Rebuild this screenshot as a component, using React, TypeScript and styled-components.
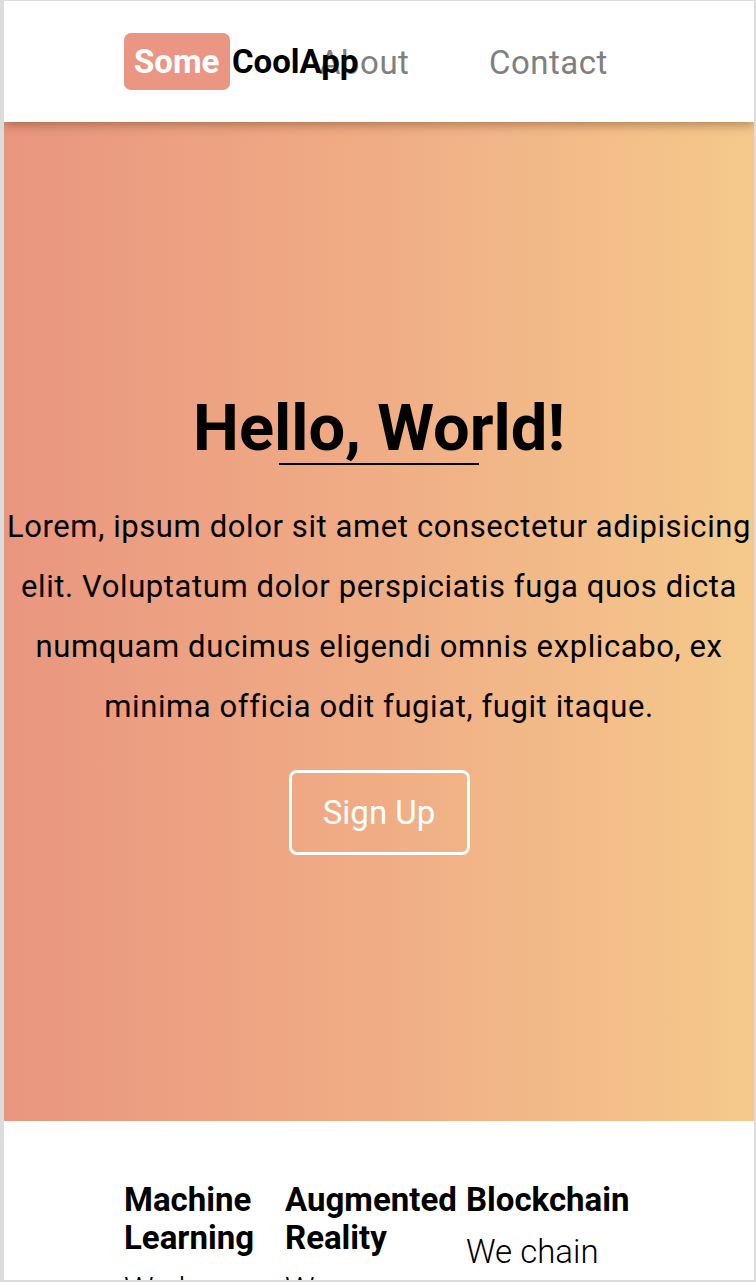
import React from "react";
import styled, { createGlobalStyle } from "styled-components";

const Global = createGlobalStyle`
  html, body { margin: 0; padding: 0; background: #fff; }
  body { font-family: Roboto, "Noto Sans", "Liberation Sans", sans-serif; }
  * { box-sizing: border-box; }
`;

const Frame = styled.div`
  width: 756px;
  height: 1282px;
  overflow: hidden;
  border-style: solid;
  border-color: #dcdcdc;
  border-width: 1px 2px 2px 4px;
  display: flex;
  flex-direction: column;
`;

const Header = styled.header`
  height: 121px;
  flex: none;
  background: #fff;
  display: flex;
  align-items: center;
  padding-left: 120px;
  position: relative;
  z-index: 2;
  box-shadow: 0 3px 10px rgba(90, 50, 20, 0.45);
`;

const Logo = styled.div`
  width: 106px;
  flex: none;
  display: flex;
  align-items: center;
  white-space: nowrap;
  font-size: 33px;
  font-weight: 700;
  position: relative;
  z-index: 1;
`;

const LogoBadge = styled.span`
  background: #eb9682;
  color: #fff;
  border-radius: 7px;
  width: 106px;
  height: 57px;
  display: flex;
  align-items: center;
  padding-left: 10px;
  flex: none;
`;

const LogoRest = styled.span`
  color: #000;
  margin-left: 2px;
`;

const Spacer = styled.span<{ $w: number }>`
  width: ${(p) => p.$w}px;
  flex: none;
`;

const NavLink = styled.a<{ $w: number }>`
  width: ${(p) => p.$w}px;
  flex: none;
  font-size: 33px;
  letter-spacing: 0.5px;
  color: #808080;
  text-decoration: none;
  margin-top: 2px;
`;

const Hero = styled.section`
  height: 999px;
  flex: none;
  background: linear-gradient(90deg, #e9967f 0%, #f0ad85 50%, #f5c98c 100%);
  display: flex;
  flex-direction: column;
  align-items: center;
  justify-content: center;
  text-align: center;
  padding-top: 4px;
`;

const Title = styled.h1`
  margin: 0;
  font-size: 65px;
  font-weight: 700;
  line-height: 70px;
  color: #000;
`;

const Rule = styled.div`
  width: 200px;
  height: 2px;
  background: #000;
  margin: 0 0 32px;
`;

const Lead = styled.p`
  margin: 0;
  font-size: 31px;
  letter-spacing: 0.6px;
  line-height: 60px;
  color: #000;
  white-space: nowrap;
`;

const SignUp = styled.button`
  margin-top: 33px;
  width: 181px;
  height: 85px;
  background: transparent;
  border: 3px solid #fff;
  border-radius: 8px;
  color: #fff;
  font-family: inherit;
  font-size: 33px;
  cursor: pointer;
`;

const Features = styled.section`
  flex: 1;
  background: #fff;
  display: flex;
  padding: 60px 0 0 120px;
`;

const Feature = styled.div<{ $w: number }>`
  width: ${(p) => p.$w}px;
  flex: none;
`;

const FeatureTitle = styled.h3`
  margin: 0;
  font-size: 33px;
  font-weight: 700;
  line-height: 38px;
  white-space: nowrap;
`;

const FeatureText = styled.p`
  margin: 8px 0 0;
  font-size: 33px;
  font-weight: 300;
  line-height: 50px;
  color: #000;
`;

export default function App() {
  return (
    <>
      <Global />
      <Frame>
        <Header>
          <Logo>
            <LogoBadge>Some</LogoBadge>
            <LogoRest>CoolApp</LogoRest>
          </Logo>
          <Spacer $w={89} />
          <NavLink href="#" $w={170}>
            About
          </NavLink>
          <NavLink href="#" $w={130}>
            Contact
          </NavLink>
        </Header>
        <Hero>
          <Title>Hello, World!</Title>
          <Rule />
          <Lead>
            Lorem, ipsum dolor sit amet consectetur adipisicing
            <br />
            elit. Voluptatum dolor perspiciatis fuga quos dicta
            <br />
            numquam ducimus eligendi omnis explicabo, ex
            <br />
            minima officia odit fugiat, fugit itaque.
          </Lead>
          <SignUp>Sign Up</SignUp>
        </Hero>
        <Features>
          <Feature $w={161}>
            <FeatureTitle>
              Machine
              <br />
              Learning
            </FeatureTitle>
            <FeatureText>We learn all of the things</FeatureText>
          </Feature>
          <Feature $w={181}>
            <FeatureTitle>
              Augmented
              <br />
              Reality
            </FeatureTitle>
            <FeatureText>We augmented stuff</FeatureText>
          </Feature>
          <Feature $w={181}>
            <FeatureTitle>Blockchain</FeatureTitle>
            <FeatureText>We chain blocks together</FeatureText>
          </Feature>
        </Features>
      </Frame>
    </>
  );
}
